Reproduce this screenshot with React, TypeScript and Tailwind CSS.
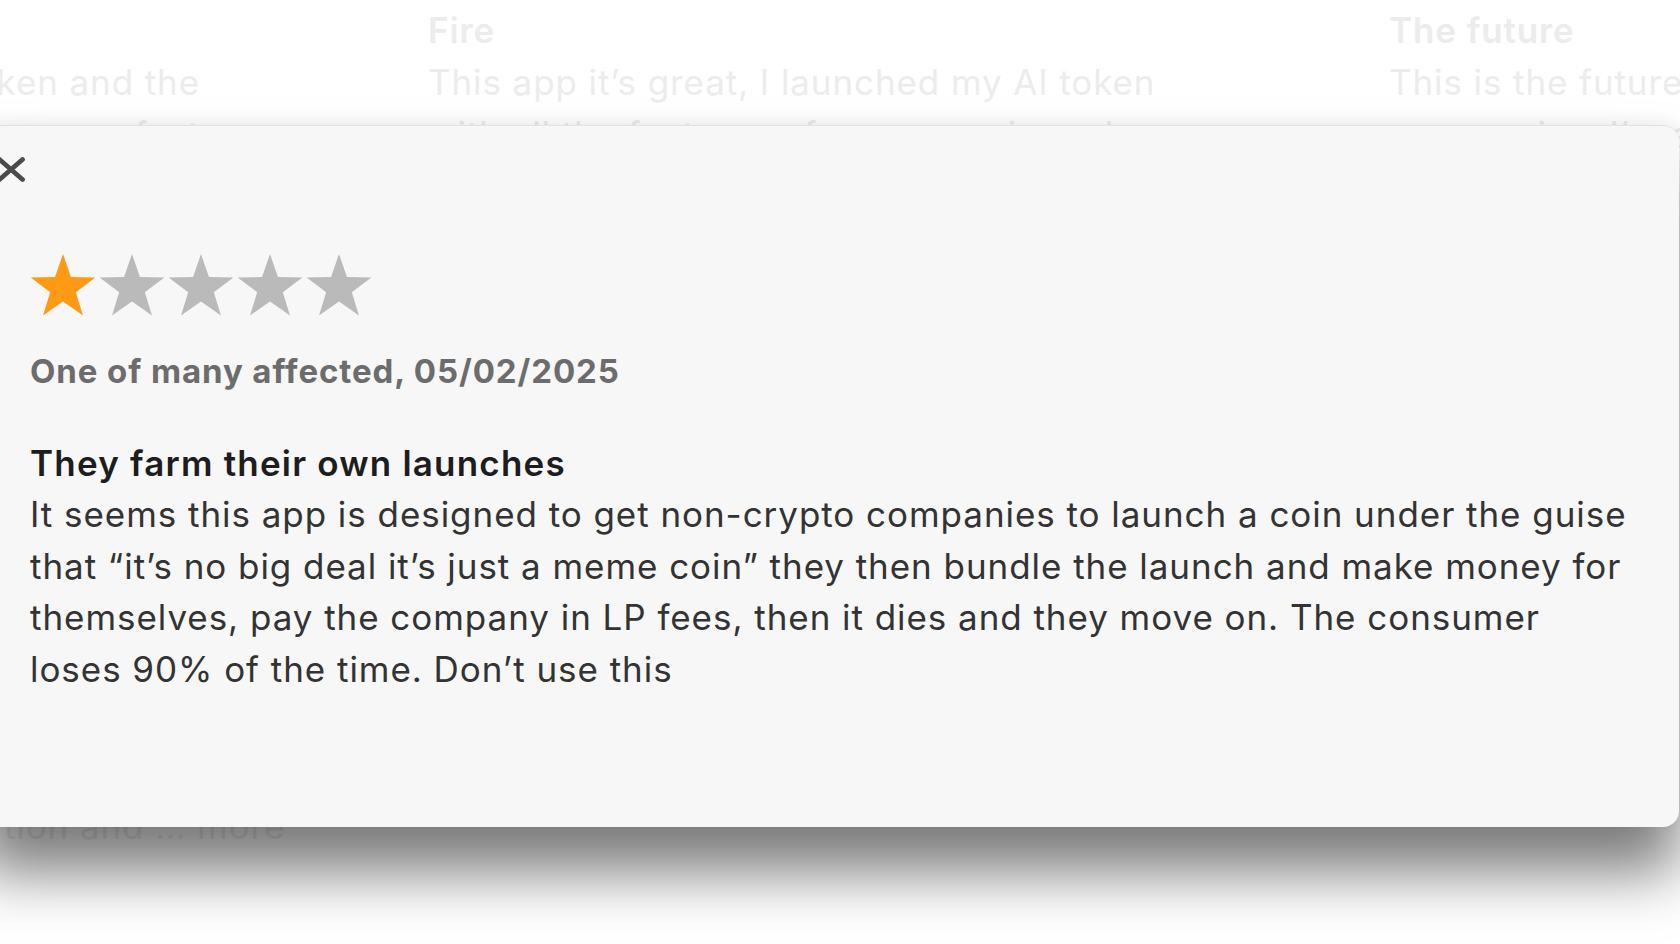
import React from "react";

const STAR =
  "M34 1 L41.94 24.08 L66.34 24.49 L46.84 39.17 L53.98 62.51 L34 48.5 L14.02 62.51 L21.16 39.17 L1.66 24.49 L26.06 24.08 Z";

function Star({ filled }: { filled: boolean }) {
  return (
    <svg viewBox="0 0 68 66" className="w-[68px] h-[66px] shrink-0">
      <path d={STAR} fill={filled ? "#ff9a14" : "#bababa"} />
    </svg>
  );
}

function Stars({ rating }: { rating: number }) {
  return (
    <div className="flex gap-[1px] -ml-[1px]">
      {[1, 2, 3, 4, 5].map((i) => (
        <Star key={i} filled={i <= rating} />
      ))}
    </div>
  );
}

function CloseIcon() {
  return (
    <svg viewBox="0 0 30 27" className="w-[30px] h-[27px]">
      <path
        d="M3.5 3.5 L26.5 23.5 M26.5 3.5 L3.5 23.5"
        stroke="#4b4b4b"
        strokeWidth="4.8"
        strokeLinecap="round"
        fill="none"
      />
    </svg>
  );
}

export default function App() {
  return (
    <main
      className="relative w-[1680px] h-[944px] overflow-hidden bg-white"
      style={{ fontFamily: "Inter, 'Noto Sans', sans-serif" }}
    >
      {/* faded review list behind the sheet */}
      <div className="flex flex-col text-[35px] leading-[52px] tracking-[0.9px] text-[#ececec]">
        <div className="flex pt-[4px]">
          <div className="w-[200px] shrink-0 flex flex-col items-end whitespace-nowrap">
            <div className="font-semibold">&nbsp;</div>
            <div className="flex justify-end w-full">Easy to launch a token and the</div>
            <div className="flex justify-end w-full">community grows fast</div>
          </div>
          <div className="ml-[228px] w-[961px] shrink-0 flex flex-col whitespace-nowrap">
            <div className="font-semibold">Fire</div>
            <div>This app it’s great, I launched my AI token</div>
            <div>with all the features of a memecoin and a</div>
          </div>
          <div className="shrink-0 flex flex-col whitespace-nowrap">
            <div className="font-semibold">The future</div>
            <div>This is the future of launching</div>
            <div>memecoins, I’m all in</div>
          </div>
        </div>
        <div className="mt-[640px] pl-[4px] whitespace-nowrap">tion and … more</div>
      </div>

      {/* review detail sheet */}
      <div className="absolute left-[-24px] top-[125px] w-[1703px] h-[702px] rounded-[16px] bg-[#f7f7f7] border-t border-[#e3e3e3] shadow-[0_45px_60px_rgba(0,0,0,0.52),0_-3px_14px_rgba(0,0,0,0.05)]">
        <div className="flex flex-col pl-[54px] pt-[30px]">
          <button className="-ml-[34px] w-[30px] h-[27px] flex items-center justify-center">
            <CloseIcon />
          </button>

          <div className="mt-[70px]">
            <Stars rating={1} />
          </div>

          <div className="mt-[32px] text-[33px] leading-[40px] tracking-[0.9px] font-bold text-[#6c6c6c]">
            One of many affected, 05/02/2025
          </div>

          <div className="mt-[46px] text-[35px] leading-[52px] tracking-[1.2px] font-semibold text-[#1d1d1f]">
            They farm their own launches
          </div>
          <p className="text-[35px] leading-[51.7px] tracking-[0.95px] text-[#333333] whitespace-nowrap">
            It seems this app is designed to get non-crypto companies to launch a coin under the guise
            <br />
            that “it’s no big deal it’s just a meme coin” they then bundle the launch and make money for
            <br />
            themselves, pay the company in LP fees, then it dies and they move on. The consumer
            <br />
            loses 90% of the time. Don’t use this
          </p>
        </div>
      </div>
    </main>
  );
}
